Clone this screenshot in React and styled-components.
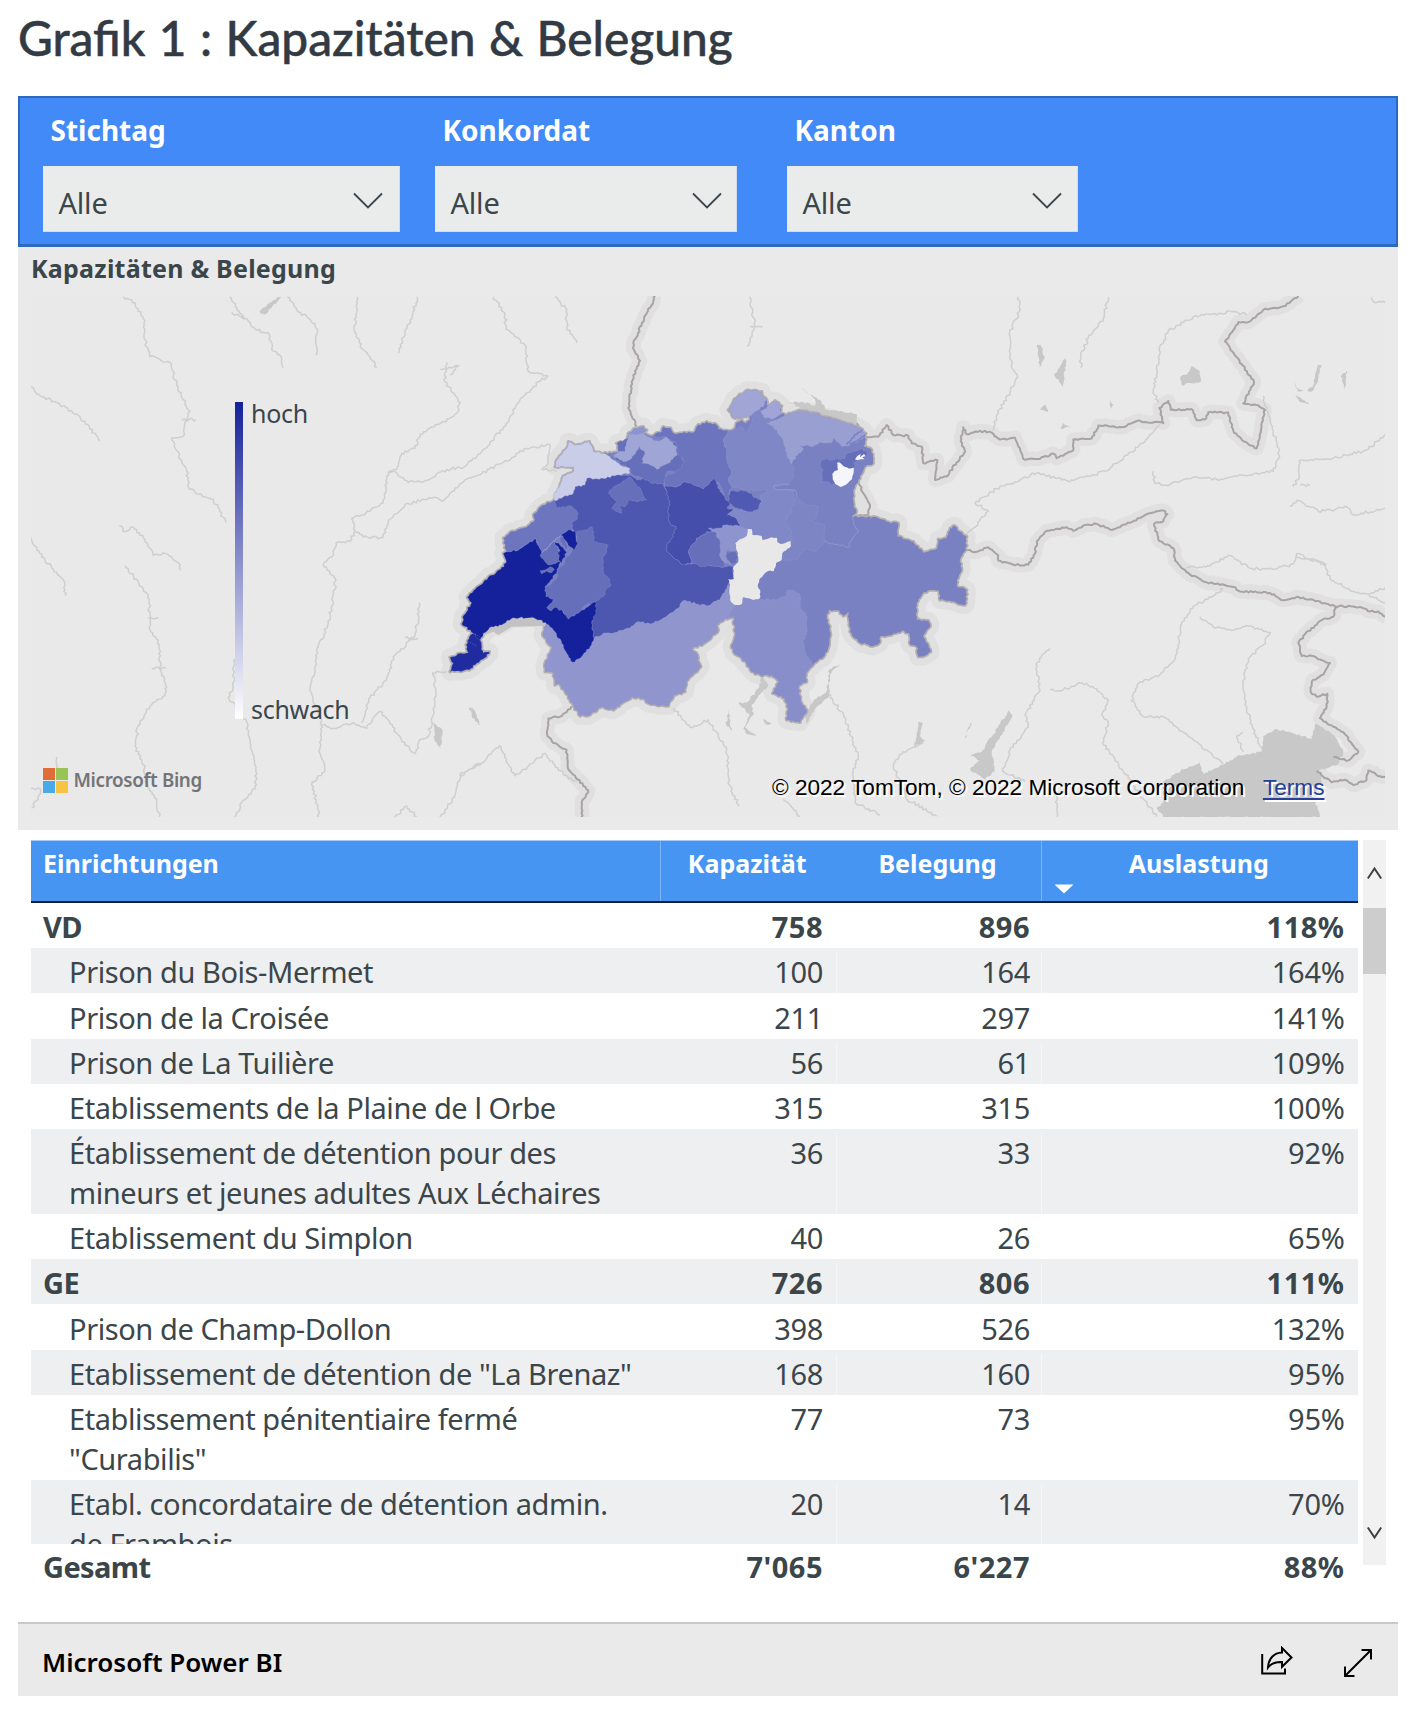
import React from "react";
import styled, { createGlobalStyle } from "styled-components";

/* ---------- map geometry ---------- */

// Every point list is digitised on one of these sheets: [left, top, units per px across, units per px down].
const SHEETS = {
  W: [430, 370, 3, 3],
  E: [700, 370, 3, 3],
  L: [0, 280, 3, 2.851],
  M: [460, 280, 3, 2.851],
  R: [930, 280, 3, 2.851],
};

function points(spec) {
  let sheet = SHEETS.W;
  const out = [];
  spec.trim().split(/\s+/).forEach((token) => {
    if (SHEETS[token]) {
      sheet = SHEETS[token];
      return;
    }
    const [x, y] = token.split(",").map(Number);
    out.push([sheet[0] + x / sheet[2], sheet[1] + y / sheet[3]]);
  });
  return out;
}

const noise = (a, b) => {
  const s = Math.sin(a * 12.9898 + b * 78.233) * 43758.5453;
  return (s - Math.floor(s)) * 2 - 1;
};

// Breaks a straight edge into small irregular steps. The result is the same in both
// directions, so that two neighbouring regions keep a common border.
function rough(p, q, amount) {
  const len = Math.hypot(q[0] - p[0], q[1] - p[1]);
  if (len < 4 || !amount) return [q];
  const flip = p[0] > q[0] || (p[0] === q[0] && p[1] > q[1]);
  const [a, b] = flip ? [q, p] : [p, q];
  const n = Math.round(len / 2.2);
  const nx = -(b[1] - a[1]) / len;
  const ny = (b[0] - a[0]) / len;
  const mids = [];
  for (let i = 1; i < n; i += 1) {
    const x = a[0] + ((b[0] - a[0]) * i) / n;
    const y = a[1] + ((b[1] - a[1]) * i) / n;
    const d = noise(Math.round(x * 2), Math.round(y * 2)) * amount;
    mids.push([x + nx * d, y + ny * d]);
  }
  if (flip) mids.reverse();
  return [...mids, q];
}

function toPath(spec, { close = false, amount = 1 } = {}) {
  return spec
    .split("|")
    .map((part) => {
      const pts = points(part);
      const ring = close ? [...pts, pts[0]] : pts;
      let d = `M${ring[0][0].toFixed(1)} ${ring[0][1].toFixed(1)}`;
      for (let i = 1; i < ring.length; i += 1) {
        rough(ring[i - 1], ring[i], amount).forEach(([x, y]) => {
          d += `L${x.toFixed(1)} ${y.toFixed(1)}`;
        });
      }
      return close ? `${d}Z` : d;
    })
    .join("");
}

const COUNTRY =
  "W 60,905 70,880 60,862 90,850 115,848 108,825 118,800 130,790 95,762 102,735 125,698 112,682 165,630 222,590 228,570 220,550 230,545 220,505 240,487 290,472 315,450 310,435 340,405 372,390 390,345 400,318 430,305 430,290 375,290 385,265 410,235 415,215 440,225 478,215 490,245 520,250 545,250 565,245 560,220 590,215 595,190 610,178 640,170 650,180 640,190 665,198 695,185 700,170 722,175 730,190 790,188 800,170 830,155 " +
  "E 50,165 55,178 85,182 105,175 108,160 125,150 137,160 150,150 148,138 130,140 105,145 85,120 100,95 115,78 145,60 185,65 190,80 200,90 200,105 215,110 225,92 245,108 240,125 255,135 300,122 350,130 400,148 450,162 480,175 497,190 495,215 490,228 515,240 520,280 495,290 475,330 460,360 460,390 468,430 455,440 520,440 560,455 595,460 592,500 640,515 672,548 712,535 715,508 740,505 750,475 765,468 780,485 800,500 798,540 780,570 785,600 770,630 770,648 800,660 795,705 750,692 720,690 715,660 690,660 668,670 650,700 650,750 685,752 690,770 670,795 692,845 680,855 655,860 650,830 632,825 628,790 605,782 575,795 540,800 538,820 510,828 475,815 450,785 445,725 430,738 415,720 385,722 380,745 390,770 388,820 375,855 340,885 318,910 320,935 298,945 298,975 305,1000 320,1020 300,1057 260,1050 265,1020 255,985 218,970 238,935 215,915 185,918 155,905 140,880 100,845 95,825 105,800 102,742 75,745 50,765 55,780 20,815 " +
  "W 785,838 800,850 812,890 768,935 765,965 730,975 715,1008 655,1000 640,985 605,980 550,1020 515,1010 480,1035 450,1038 420,990 405,965 385,940 375,945 372,910 345,905 345,880 368,830 350,815 338,790 350,762 330,750 300,743 250,743 215,765 185,770 160,790 150,810 155,832 160,848 178,845 170,860 140,880 118,900";

const CANTONS = [
  ["GE", "#1f2b9f", "W 60,905 70,880 60,862 90,850 115,848 108,825 118,800 130,790 150,800 150,810 155,832 160,848 178,845 170,860 140,880 118,900"],
  ["BE", "#4d57b0", "W 372,390 400,380 430,370 435,350 465,345 470,325 520,325 560,315 600,315 620,330 650,325 670,340 700,342 712,365 718,400 715,430 720,460 738,470 730,500 712,520 712,545 755,583 790,580 870,590 E 75,590 100,590 100,625 85,640 80,665 60,690 20,708 W 760,692 745,715 700,745 660,762 625,755 600,775 540,790 520,790 505,800 492,805 485,760 470,650 480,600 430,480 372,420"],
  ["VS", "#9096cd", "W 350,762 375,785 395,820 410,850 428,877 450,865 480,830 492,805 505,800 520,790 540,790 600,775 625,755 660,762 700,745 745,715 760,692 830,708 E 60,690 75,660 85,645 90,695 105,705 100,725 85,735 102,742 75,745 50,765 55,780 20,815 W 785,838 800,850 812,890 768,935 765,965 730,975 715,1008 655,1000 640,985 605,980 550,1020 515,1010 480,1035 450,1038 420,990 405,965 385,940 375,945 372,910 345,905 345,880 368,830 350,815 338,790"],
  ["VD", "#15219a", "W 95,762 102,735 125,698 112,682 165,630 222,590 228,570 220,550 230,545 265,540 295,520 315,505 340,548 400,540 380,610 345,650 375,688 400,730 440,730 495,695 500,715 485,760 492,805 480,830 450,865 428,877 410,850 395,820 375,785 350,762 330,750 300,743 250,743 215,765 185,770 160,790 150,810 130,790"],
  ["FR", "#666fb9", "W 345,650 365,640 380,625 380,605 400,585 405,565 425,545 440,525 440,485 470,480 485,470 492,485 490,515 515,520 535,525 530,545 518,565 520,605 540,630 540,650 525,665 520,680 495,695 470,705 445,730 415,748 400,725 375,712 365,722 350,712 370,688 348,680 | W 330,602 345,600 360,590 373,598 365,608 350,603 335,612"],
  ["NE", "#6c75be", "W 220,505 240,487 290,472 315,450 310,435 340,405 372,390 380,415 425,408 445,430 440,450 425,460 430,480 410,485 390,497 335,550 318,505 295,520 265,540 230,545"],
  ["Avenches", "#15219a", "W 393,495 415,480 435,483 438,505 443,520 432,540 420,530 410,515 | W 373,515 390,525 410,548 400,565 395,580 385,570 390,540"],
  ["Estavayer", "#666fb9", "W 330,555 373,515 385,535 383,550 390,575 370,582 355,585 | W 385,503 398,498 413,530 408,540"],
  ["JU", "#cacde8", "W 375,290 385,265 410,235 415,215 440,225 478,215 490,245 520,250 550,270 570,285 600,295 600,310 560,315 520,325 470,325 465,345 435,350 430,370 400,380 375,392 370,375 390,345 400,318 430,305 430,290"],
  ["SO", "#666fb9", "W 545,255 565,245 560,220 600,200 745,220 755,265 765,275 763,295 745,305 710,305 702,342 690,340 670,340 640,325 605,312 600,295 570,280 | W 540,360 600,320 625,350 650,390 620,395 595,390 585,410 570,405 575,430 545,415 560,395 535,370"],
  ["AG", "#6c74be", "W 665,198 695,185 700,170 722,175 730,190 790,188 800,170 830,155 E 50,165 55,178 85,182 70,215 82,240 80,265 95,310 85,325 95,350 88,365 90,400 75,385 60,345 40,325 W 820,357 790,345 765,335 740,350 702,350 705,320 745,300 765,275 745,255 740,220 705,200"],
  ["BL", "#9fa5d5", "W 590,215 595,195 610,185 640,190 670,210 690,212 708,200 740,230 742,255 715,280 680,298 660,285 635,280 645,250 628,228 605,265 580,275 550,258 565,245 585,245"],
  ["BS", "#8c93ce", "W 598,190 610,178 640,170 650,180 640,190 618,195"],
  ["LU", "#454eab", "W 702,350 740,350 765,335 790,345 820,357 850,325 E 45,330 60,365 75,385 90,400 82,415 100,418 82,435 105,442 122,465 85,468 60,475 40,478 20,490 W 800,505 775,545 785,578 755,583 712,545 712,520 730,500 738,470 720,460 715,430 718,400 712,365"],
  ["OW", "#686fba", "W 835,485 800,505 775,545 785,580 815,590 840,588 870,590 E 75,588 70,565 62,520 60,485 20,485 | E 78,545 105,545 115,560 110,580 90,583 80,570"],
  ["NW", "#8e94cd", "E 25,475 60,475 75,465 120,470 145,478 140,510 110,520 118,545 80,540 75,560 95,583 75,580 60,560 62,520 45,485"],
  ["ZH", "#7f87c6", "E 85,182 100,180 125,170 140,188 155,160 165,125 180,120 200,145 220,140 215,165 235,180 250,210 262,260 275,285 282,290 280,320 265,345 225,345 220,358 160,362 95,350 85,325 95,310 80,265 82,240 70,215"],
  ["SH", "#a0a5d5", "E 85,120 100,95 115,78 145,60 185,65 190,80 200,90 190,110 165,125 150,138 130,140 105,145 | E 182,122 200,115 215,95 225,92 245,108 240,135 215,148 190,140"],
  ["TG", "#9a9fd1", "E 200,160 225,150 255,135 300,122 350,130 400,148 450,162 480,175 497,190 490,205 450,225 425,230 400,205 390,220 360,215 340,230 300,225 310,240 295,250 275,282 262,260 250,210 230,180"],
  ["SZ", "#8188c7", "E 85,430 100,417 150,425 170,420 185,390 180,375 220,360 280,360 285,390 272,430 255,455 275,490 272,515 240,520 230,502 195,508 185,498 155,495 145,478 120,470 122,465 105,442"],
  ["GL", "#7d85c4", "E 290,380 315,402 355,408 352,435 338,455 372,465 375,515 345,545 320,535 300,550 290,570 255,570 245,565 272,528 275,490 255,455 272,430"],
  ["ZG", "#505ab3", "E 90,365 135,362 155,370 160,382 185,395 175,418 150,425 100,410 88,400"],
  ["AR", "#6670ba", "E 365,270 435,265 440,250 485,235 503,248 490,265 465,275 462,300 440,330 395,345 380,335 362,335 370,300 360,285"],
  ["TI", "#888ec9", "E 105,705 125,703 130,685 180,688 235,688 260,675 262,660 275,660 300,672 300,710 322,740 322,780 310,820 318,855 340,885 318,910 320,935 298,945 298,975 305,1000 320,1020 300,1057 260,1050 265,1020 255,985 218,970 238,935 215,915 185,918 155,905 140,880 100,845 95,825 105,800 102,742 85,735"],
];

const APPENZELL =
  "E 411,278 418,277 430,288 447,296 461,293 460,312 456,328 440,343 422,351 406,342 398,328 397,312 404,303 414,300";

const URI =
  "E 140,498 143,478 155,478 157,494 185,498 188,510 215,502 230,503 232,515 242,522 272,513 273,528 247,550 245,570 228,580 222,603 205,603 180,625 173,648 180,660 180,685 160,690 130,682 125,703 105,705 92,695 88,670 90,645 85,628 102,627 100,590 115,575 112,545 106,520 120,508";

const INNER_BORDERS =
  "E 375,515 445,532 455,510 475,485 462,465 458,440 | E 290,380 285,360 250,358 225,358 225,345 265,345 | W 335,550 390,497";

const BORDERS =
  "M 585,45 580,60 560,95 520,180 522,200 540,230 515,290 505,365 530,418 | M 340,1215 300,1245 265,1250 262,1300 280,1320 320,1340 325,1395 385,1455 365,1490 365,1532 | " +
  "E 470,160 497,200 535,200 560,165 580,195 625,197 635,220 665,230 670,280 712,270 705,330 R 50,560 80,520 105,490 92,460 100,420 110,440 150,430 185,435 210,455 255,450 270,480 280,510 330,510 370,495 380,508 430,485 430,455 485,452 505,415 575,420 620,402 700,408 688,365 715,345 722,370 785,368 800,400 825,398 835,377 895,378 910,430 940,460 980,480 1005,370 985,357 940,352 972,290 935,240 885,175 925,120 960,118 1000,85 1060,75 1105,45 | " +
  "R 105,770 140,775 175,762 205,785 205,800 250,812 295,812 315,780 320,745 350,715 410,705 430,715 460,700 500,695 545,713 600,692 660,665 700,657 712,668 700,688 672,695 685,740 730,765 735,800 780,840 830,862 910,875 930,888 1020,892 1060,913 1100,903 1150,912 1215,930 1290,932 1320,945 1345,945 1367,960 | " +
  "R 1215,930 1210,960 1175,970 1125,1010 1105,1035 1115,1072 1140,1070 1200,1092 1180,1125 1145,1145 1142,1175 1160,1188 1192,1180 1190,1215 1170,1250 1245,1295 1285,1345 1255,1370 1210,1360 | R 1160,1400 1205,1432 1245,1425 1270,1440 1310,1425 1315,1398 1350,1415 1367,1417 | " +
  "E 475,335 490,370 510,405 502,435 455,440";

const RIVERS =
  "L 370,48 405,65 430,110 438,190 450,218 510,235 530,300 570,375 560,400 550,445 515,450 540,510 560,545 565,590 590,610 640,625 660,660 678,692 | " +
  "L 93,305 110,325 180,355 240,390 300,458 | L 93,732 110,770 160,825 195,865 195,900 | L 358,700 375,718 400,705 430,735 460,785 490,778 540,810 542,828 | " +
  "L 375,815 430,880 448,910 448,990 478,1040 480,1110 500,1160 495,1185 450,1215 415,1270 405,1330 435,1385 435,1430 470,1480 478,1530 | " +
  "L 690,48 720,95 765,140 808,155 815,195 845,225 850,250 | L 862,48 890,85 945,125 952,150 948,215 | L 1070,48 1065,150 1085,195 1105,215 1130,250 | L 1252,48 1235,110 1215,150 1197,208 | " +
  "L 1340,235 1335,290 1380,350 1370,380 1320,410 1260,440 1245,480 1205,495 1190,540 1165,548 1150,635 1085,670 1055,680 1065,715 1050,745 1008,750 1000,785 970,810 1008,855 995,930 985,980 955,1045 945,1110 930,1165 940,1205 965,1255 960,1350 975,1395 935,1440 952,1495 955,1532 | " +
  "L 1165,548 1190,550 1225,577 1275,572 1340,540 1390,535 M 60,495 130,420 175,350 235,290 265,275 | L 1065,715 1090,733 1148,735 1165,690 1215,640 1300,620 1330,630 1395,570 M 60,555 130,520 200,480 270,470 265,520 245,540 290,545 | " +
  "L 967,1268 1000,1278 1060,1262 1100,1278 1140,1230 1170,1265 1215,1325 1245,1350 1260,1310 1285,1300 1300,1240 1308,1180 1298,1120 1340,1115 | L 1085,1262 1110,1190 1160,1140 1185,1070 1240,1020 1255,970 1258,920 | L 1440,1378 1380,1410 1365,1470 1320,1532 | " +
  "L 703,1080 700,1160 685,1190 710,1220 740,1260 755,1340 768,1390 765,1450 725,1490 705,1532 | L 93,1450 120,1450 115,1480 95,1505 | L 170,1360 172,1395 | L 1185,1532 1220,1500 1250,1530 | " +
  "L 445,963 475,963 | L 455,1107 497,1107 | L 545,400 588,398 | L 1320,255 1375,245 1350,270 | L 1215,1020 1255,1022 | L 695,92 735,112 | " +
  "M 100,48 135,95 138,140 195,185 205,260 265,275 | M 285,48 320,85 320,135 350,180 | M 868,48 885,130 862,190 | M 870,133 908,135 | M 0,1415 75,1370 118,1328 165,1415 255,1350 310,1410 350,1430 | M 640,1220 690,1275 745,1255 800,1340 808,1440 838,1500 | " +
  "M 1105,1180 1150,1240 1195,1360 1180,1400 1185,1490 1260,1525 | M 1390,1320 1330,1345 1300,1385 1340,1480 1430,1528 | M 970,1480 1020,1530 | " +
  "R 265,48 268,90 238,155 245,250 262,270 240,320 200,385 190,430 | R 535,48 520,110 475,165 452,215 452,250 | R 950,100 905,90 790,105 715,145 688,200 680,270 670,315 685,350 | " +
  "R 690,412 640,465 525,545 420,575 320,550 200,595 135,635 175,660 110,728 | R 670,545 675,580 720,583 790,562 860,568 960,555 1030,545 1048,500 1030,430 1000,330 | R 1367,440 1310,485 1210,508 1108,515 1108,560 1090,590 | R 1110,585 1140,585 | " +
  "R 1080,645 1100,628 1165,660 1215,655 1245,645 1275,670 1367,650 | R 770,820 840,815 895,785 960,822 1030,825 1090,810 1100,780 1180,810 1200,850 1260,885 1310,895 1367,920 | R 1100,790 1150,795 1190,812 | R 1320,895 1367,875 | " +
  "R 880,880 850,900 790,930 755,980 735,1080 690,1125 625,1150 605,1200 640,1245 700,1245 760,1290 880,1380 | R 810,960 850,990 900,998 950,985 1020,1005 1000,1040 955,1080 940,1150 945,1210 970,1280 995,1335 | " +
  "R 360,1050 318,1095 330,1170 285,1240 295,1275 240,1340 218,1400 285,1430 | R 360,1170 400,1168 450,1148 500,1165 535,1200 515,1240 535,1260 518,1320 580,1400 640,1480 680,1530 | R 380,1470 380,1530 | R 1323,50 1330,62 1367,65 | R 940,1290 920,1300 940,1345";

const LAKES =
  "R 680,1505 700,1490 700,1430 760,1395 810,1375 820,1410 930,1355 995,1345 1000,1300 1040,1280 1145,1308 1155,1265 1215,1300 1240,1345 1225,1380 1165,1400 1175,1430 1150,1470 1170,1532 700,1532 | " +
  "R 235,1228 248,1240 185,1345 195,1400 165,1425 120,1395 150,1370 120,1355 155,1345 | R 320,185 332,185 345,220 328,248 | R 408,220 400,305 372,270 | R 785,245 810,260 812,290 755,300 752,275 770,270 | " +
  "R 1163,242 1174,242 1160,295 1145,318 1132,316 1150,300 | R 1092,290 1105,310 1120,315 1105,318 | R 1250,258 1245,312 1232,275 | R 1095,328 1112,335 1138,355 1110,348 | R 345,355 355,376 330,370 | R 540,342 550,355 542,368 | R 400,408 422,418 392,425 | R 125,1262 105,1308 115,1275 | " +
  "M 905,1130 925,1155 875,1210 880,1240 855,1275 895,1300 860,1295 850,1280 870,1240 835,1205 860,1205 895,1165 | M 1140,1095 1110,1125 1108,1185 1055,1235 1040,1268 1035,1240 1060,1200 1100,1172 1108,1110 | " +
  "M 30,1218 42,1225 62,1270 45,1258 | M 805,1225 815,1285 798,1268 | M 910,1252 942,1265 920,1268 | M 1375,1260 1388,1262 1380,1300 1395,1312 1362,1332 | " +
  "E 250,140 300,112 265,97 310,97 345,108 345,88 303,55 365,95 375,118 470,132 475,168 400,152 300,128 | L 1300,1260 1328,1285 1322,1335 1305,1315 | L 830,50 845,50 795,98 778,90 | L 1408,1218 1440,1262 1415,1245";

const GENEVA_LAKE = "W 150,800 165,785 185,768 250,740 350,745 345,768 245,770 205,795 190,785";

/* ---------- page ---------- */

const Global = createGlobalStyle`
  * { box-sizing: border-box; }
  body {
    margin: 0;
    background: #fff;
    font-family: "Noto Sans", "Open Sans", sans-serif;
    color: #3b464b;
  }
`;

const Page = styled.main`
  width: 1416px;
  height: 1716px;
  padding: 0 18px;
  overflow: hidden;
`;

const Title = styled.h1`
  height: 96px;
  margin: 0;
  padding-top: 7px;
  font: 500 47.8px/62px Lato, "Open Sans", sans-serif;
  word-spacing: 1.4px;
  color: #323a43;
  -webkit-text-stroke: 0.5px #323a43;
  white-space: nowrap;
`;

const Filters = styled.section`
  display: flex;
  height: 151px;
  padding: 14px 0 0 23px;
  border: 2px solid #2e69bf;
  border-bottom-width: 3px;
  background: #418af7;
`;

const Filter = styled.div`
  width: ${(p) => p.$width}px;
  margin-right: ${(p) => p.$gap}px;
`;

const FilterLabel = styled.div`
  height: 54px;
  padding-left: 7.5px;
  font-size: 28px;
  font-weight: 700;
  line-height: 36px;
  color: #fff;
`;

const Select = styled.div`
  display: flex;
  justify-content: space-between;
  height: 66px;
  padding: 16px ${(p) => p.$inset}px 0 14.5px;
  border: 1px solid #cfdcee;
  border-top-color: #eaecec;
  border-left-color: #eaecec;
  background: #eaecec;
  font-size: 29px;
  letter-spacing: -0.2px;
  line-height: 40px;
`;

const SelectChevron = styled.svg`
  width: 30px;
  height: 17px;
  margin-top: 9px;
`;

const MapPanel = styled.section`
  height: 583px;
  padding: 0 13px;
  background: #eaeaea;
`;

const PanelTitle = styled.h2`
  height: 49px;
  margin: 0;
  padding-top: 4px;
  font-size: 25px;
  font-weight: 700;
  line-height: 35px;
  letter-spacing: 0.24px;
`;

const MapFrame = styled.div`
  position: relative;
  width: 1354px;
  height: 521px;
  overflow: hidden;
`;

const MapArt = styled.svg`
  display: block;
  width: 1354px;
  height: 521px;
`;

const Legend = styled.div`
  position: absolute;
  left: 204px;
  top: 106px;
  display: flex;
  gap: 8px;
  height: 317px;
`;

const LegendBar = styled.div`
  width: 8px;
  background: linear-gradient(#15219a, #fff);
`;

const LegendText = styled.div`
  display: flex;
  flex-direction: column;
  justify-content: space-between;
  margin: -5px 0 -6px;
  font-size: 25px;
  line-height: 32px;
  letter-spacing: -0.3px;
`;

const Bing = styled.div`
  position: absolute;
  left: 12px;
  top: 472px;
  display: flex;
  gap: 5.5px;
  font-size: 18.8px;
  font-weight: 600;
  line-height: 25px;
  letter-spacing: -0.35px;
  color: #737477;
`;

const BingSquares = styled.div`
  display: grid;
  grid-template-columns: 12px 12px;
  grid-template-rows: 12px 12px;
  gap: 1px;
`;

const Square = styled.span`
  background: ${(p) => p.$color};
`;

const Credits = styled.div`
  position: absolute;
  left: 741px;
  top: 479px;
  display: flex;
  gap: 18.5px;
  font: 22.6px/26px "Liberation Sans", Arial, sans-serif;
  color: #000;
  text-shadow: 2px 2px 0 #fff;
  white-space: nowrap;
`;

const Terms = styled.a`
  color: #27409a;
  text-decoration: underline;
  text-decoration-thickness: 2px;
  text-underline-offset: 3px;
`;

const TablePanel = styled.section`
  display: flex;
  gap: 5px;
  height: 792px;
  padding: 10px 13px 0;
`;

const Table = styled.div`
  width: 1327px;
`;

const columns = "629px 175.5px 205px 317.5px";

const HeaderRow = styled.div`
  display: grid;
  grid-template-columns: ${columns};
  height: 63px;
  border-top: 1px solid #a5c9f8;
  border-bottom: 2px solid #0f1d3c;
  background: #4795f2;
`;

const HeaderCell = styled.div`
  position: relative;
  padding: 5px 13px 0 11px;
  border-left: 1px solid ${(p) => (p.$line ? "#7db5f6" : "transparent")};
  font-size: 25px;
  font-weight: 700;
  line-height: 34px;
  color: #fff;
  text-align: ${(p) => p.$align || "center"};
`;

const SortMark = styled.svg`
  position: absolute;
  left: 12.5px;
  top: 42.5px;
  width: 20px;
  height: 10px;
`;

const Body = styled.div`
  height: 641px;
  overflow: hidden;
`;

const Row = styled.div`
  display: grid;
  grid-template-columns: ${columns};
  height: ${(p) => (p.$tall ? 85.1 : 45.2)}px;
  padding-top: ${(p) => (p.$last ? 3 : 4.2)}px;
  background: ${(p) => (p.$shaded ? "#eeeff1" : "#fff")};
  font-weight: ${(p) => (p.$strong ? 700 : 400)};
`;

const NameCell = styled.div`
  padding-left: ${(p) => (p.$indent ? 38 : 12)}px;
  font-size: 29px;
  line-height: 40px;
  letter-spacing: ${(p) => (p.$indent ? -0.42 : -0.6)}px;
  white-space: pre-line;
`;

const NumberCell = styled.div`
  padding-right: ${(p) => p.$pad}px;
  border-left: 1px solid ${(p) => (p.$line ? "#f5f6f7" : "transparent")};
  font-size: 29px;
  line-height: 40px;
  letter-spacing: ${(p) => (p.$strong ? 0.5 : -0.3)}px;
  text-align: right;
`;

const Scrollbar = styled.div`
  display: flex;
  flex-direction: column;
  align-items: center;
  width: 23px;
  height: 725px;
  background: #f1f1f1;
`;

const Arrow = styled.svg`
  width: 15px;
  height: 14px;
  margin-top: ${(p) => p.$top}px;
`;

const Thumb = styled.div`
  width: 23px;
  height: 66px;
  margin-top: 28px;
  background: #cdcdcd;
`;

const Footer = styled.footer`
  display: flex;
  align-items: center;
  height: 74px;
  padding: 4px 25px 0 24px;
  border-top: 2px solid #c8c8c8;
  background: #eaeaea;
  color: #000;
`;

const FooterName = styled.div`
  flex: 1;
  font-size: 26px;
  font-weight: 600;
  line-height: 40px;
`;

const ShareIcon = styled.svg`
  width: 33px;
  height: 30px;
  margin: -2px 49px 0 0;
`;

const ExpandIcon = styled.svg`
  width: 30px;
  height: 30px;
  margin-top: 2px;
`;

const FILTERS = [
  { label: "Stichtag", width: 357, gap: 35, inset: 16 },
  { label: "Konkordat", width: 302, gap: 50, inset: 14 },
  { label: "Kanton", width: 291, gap: 0, inset: 15 },
];

const NUMBER_PADS = [12.5, 10.5, 13.5];

const ROWS = [
  { name: "VD", values: ["758", "896", "118%"], total: true },
  { name: "Prison du Bois-Mermet", values: ["100", "164", "164%"] },
  { name: "Prison de la Croisée", values: ["211", "297", "141%"] },
  { name: "Prison de La Tuilière", values: ["56", "61", "109%"] },
  { name: "Etablissements de la Plaine de l Orbe", values: ["315", "315", "100%"] },
  { name: "Établissement de détention pour des\nmineurs et jeunes adultes Aux Léchaires", values: ["36", "33", "92%"] },
  { name: "Etablissement du Simplon", values: ["40", "26", "65%"] },
  { name: "GE", values: ["726", "806", "111%"], total: true },
  { name: "Prison de Champ-Dollon", values: ["398", "526", "132%"] },
  { name: 'Etablissement de détention de "La Brenaz"', values: ["168", "160", "95%"] },
  { name: 'Etablissement pénitentiaire fermé\n"Curabilis"', values: ["77", "73", "95%"] },
  { name: "Etabl. concordataire de détention admin.\nde Frambois", values: ["20", "14", "70%"] },
];

function TableRow({ row, shaded, last }) {
  return (
    <Row $shaded={shaded} $strong={row.total} $tall={row.name.includes("\n")} $last={last}>
      <NameCell $indent={!row.total}>{row.name}</NameCell>
      {row.values.map((value, i) => (
        <NumberCell key={i} $strong={row.total} $line={i > 0 && shaded} $pad={NUMBER_PADS[i]}>
          {value}
        </NumberCell>
      ))}
    </Row>
  );
}

function SwissMap() {
  const coast = toPath(COUNTRY, { close: true });
  const borders = toPath(BORDERS, { amount: 0.9 });
  return (
    <MapArt viewBox="31 296 1354 521">
      <rect x="31" y="296" width="1354" height="521" fill="#e9e9e9" />
      <g fill="none" stroke="#e0e0e0" strokeWidth="14" strokeLinejoin="round">
        <path d={borders} />
        <path d={coast} strokeWidth="18" />
      </g>
      <path d={toPath(RIVERS, { amount: 1.4 })} fill="none" stroke="#cfcfcf" strokeWidth="1.5" />
      <path d={toPath(LAKES, { close: true })} fill="#c8c8c8" />
      <g fill="none" stroke="#a9a3a3" strokeWidth="2" strokeLinejoin="round">
        <path d={borders} />
        <path d={coast} strokeWidth="3.4" stroke="#b5b0b0" />
      </g>
      <path d={toPath(GENEVA_LAKE, { close: true, amount: 0 })} fill="#c2c2c2" />
      <path d={coast} fill="#7981c2" />
      {CANTONS.map(([name, color, spec]) => (
        <path
          key={name}
          d={toPath(spec, { close: true })}
          fill={color}
          stroke="#9aa1d6"
          strokeOpacity="0.45"
          strokeWidth="0.6"
        />
      ))}
      <path d={toPath(APPENZELL, { close: true, amount: 0.4 })} fill="#f5f5fc" />
      <path d={toPath(INNER_BORDERS)} fill="none" stroke="#9aa1d6" strokeWidth="0.7" />
      <path d={toPath("E 440,225 455,205 485,180 | E 448,222 475,210 495,195")} fill="none" stroke="#7981c2" strokeWidth="1.4" />
      <path
        d={toPath("E 465,268 472,258 482,252 480,262 492,252 496,258 487,262 493,268 482,268 472,271", { close: true, amount: 0 })}
        fill="#f5f5fc"
      />
      <path d={toPath("W 130,790 150,800 | W 115,815 140,828", { amount: 0 })} stroke="#6a73c4" strokeWidth="0.7" strokeDasharray="1 1" />
      <path d={toPath(URI, { close: true, amount: 0.5 })} fill="#e8e8e8" />
    </MapArt>
  );
}

export default function App() {
  return (
    <Page>
      <Global />
      <Title>Grafik 1 : Kapazitäten &amp; Belegung</Title>
      <Filters>
        {FILTERS.map((f) => (
          <Filter key={f.label} $width={f.width} $gap={f.gap}>
            <FilterLabel>{f.label}</FilterLabel>
            <Select $inset={f.inset}>
              Alle
              <SelectChevron viewBox="0 0 30 17" fill="none" stroke="#3b464b" strokeWidth="1.8">
                <path d="M1 1.5 15 15.5 29 1.5" />
              </SelectChevron>
            </Select>
          </Filter>
        ))}
      </Filters>
      <MapPanel>
        <PanelTitle>Kapazitäten &amp; Belegung</PanelTitle>
        <MapFrame>
          <SwissMap />
          <Legend>
            <LegendBar />
            <LegendText>
              <span>hoch</span>
              <span>schwach</span>
            </LegendText>
          </Legend>
          <Bing>
            <BingSquares>
              <Square $color="#e06c37" />
              <Square $color="#99c455" />
              <Square $color="#4ca9e8" />
              <Square $color="#f6c344" />
            </BingSquares>
            Microsoft Bing
          </Bing>
          <Credits>
            <span>© 2022 TomTom, © 2022 Microsoft Corporation</span>
            <Terms>Terms</Terms>
          </Credits>
        </MapFrame>
      </MapPanel>
      <TablePanel>
        <Table>
          <HeaderRow>
            <HeaderCell $align="left">Einrichtungen</HeaderCell>
            <HeaderCell $line>Kapazität</HeaderCell>
            <HeaderCell>Belegung</HeaderCell>
            <HeaderCell $line>
              Auslastung
              <SortMark viewBox="0 0 20 10">
                <path d="M0.5 0.5h19L10 9.5z" fill="#fff" />
              </SortMark>
            </HeaderCell>
          </HeaderRow>
          <Body>
            {ROWS.map((row, i) => (
              <TableRow key={row.name} row={row} shaded={i % 2 === 1} />
            ))}
          </Body>
          <TableRow last row={{ name: "Gesamt", values: ["7'065", "6'227", "88%"], total: true }} />
        </Table>
        <Scrollbar>
          <Arrow $top={26} viewBox="0 0 15 14" fill="none" stroke="#3f3f3f" strokeWidth="2">
            <path d="M0.8 12.5 7.5 2.5 14.2 12.5" />
          </Arrow>
          <Thumb />
          <Arrow $top={552} viewBox="0 0 15 14" fill="none" stroke="#3f3f3f" strokeWidth="2">
            <path d="M0.8 1.5 7.5 11.5 14.2 1.5" />
          </Arrow>
        </Scrollbar>
      </TablePanel>
      <Footer>
        <FooterName>Microsoft Power BI</FooterName>
        <ShareIcon viewBox="0 0 33 30" fill="none" stroke="#000" strokeWidth="2">
          <path d="M1.2 8V27.5H24V22.5" />
          <path d="M7 21.5C7.5 12.5 13 6.8 21 6.5V2L30.5 11.5 21 20.800V16C14.5 15.8 10 17.5 7 21.5Z" />
        </ShareIcon>
        <ExpandIcon viewBox="0 0 30 30" fill="none" stroke="#000" strokeWidth="2">
          <path d="M2 28 28 2M18.5 2H28V11.5M2 18.5V28H11.5" />
        </ExpandIcon>
      </Footer>
    </Page>
  );
}
